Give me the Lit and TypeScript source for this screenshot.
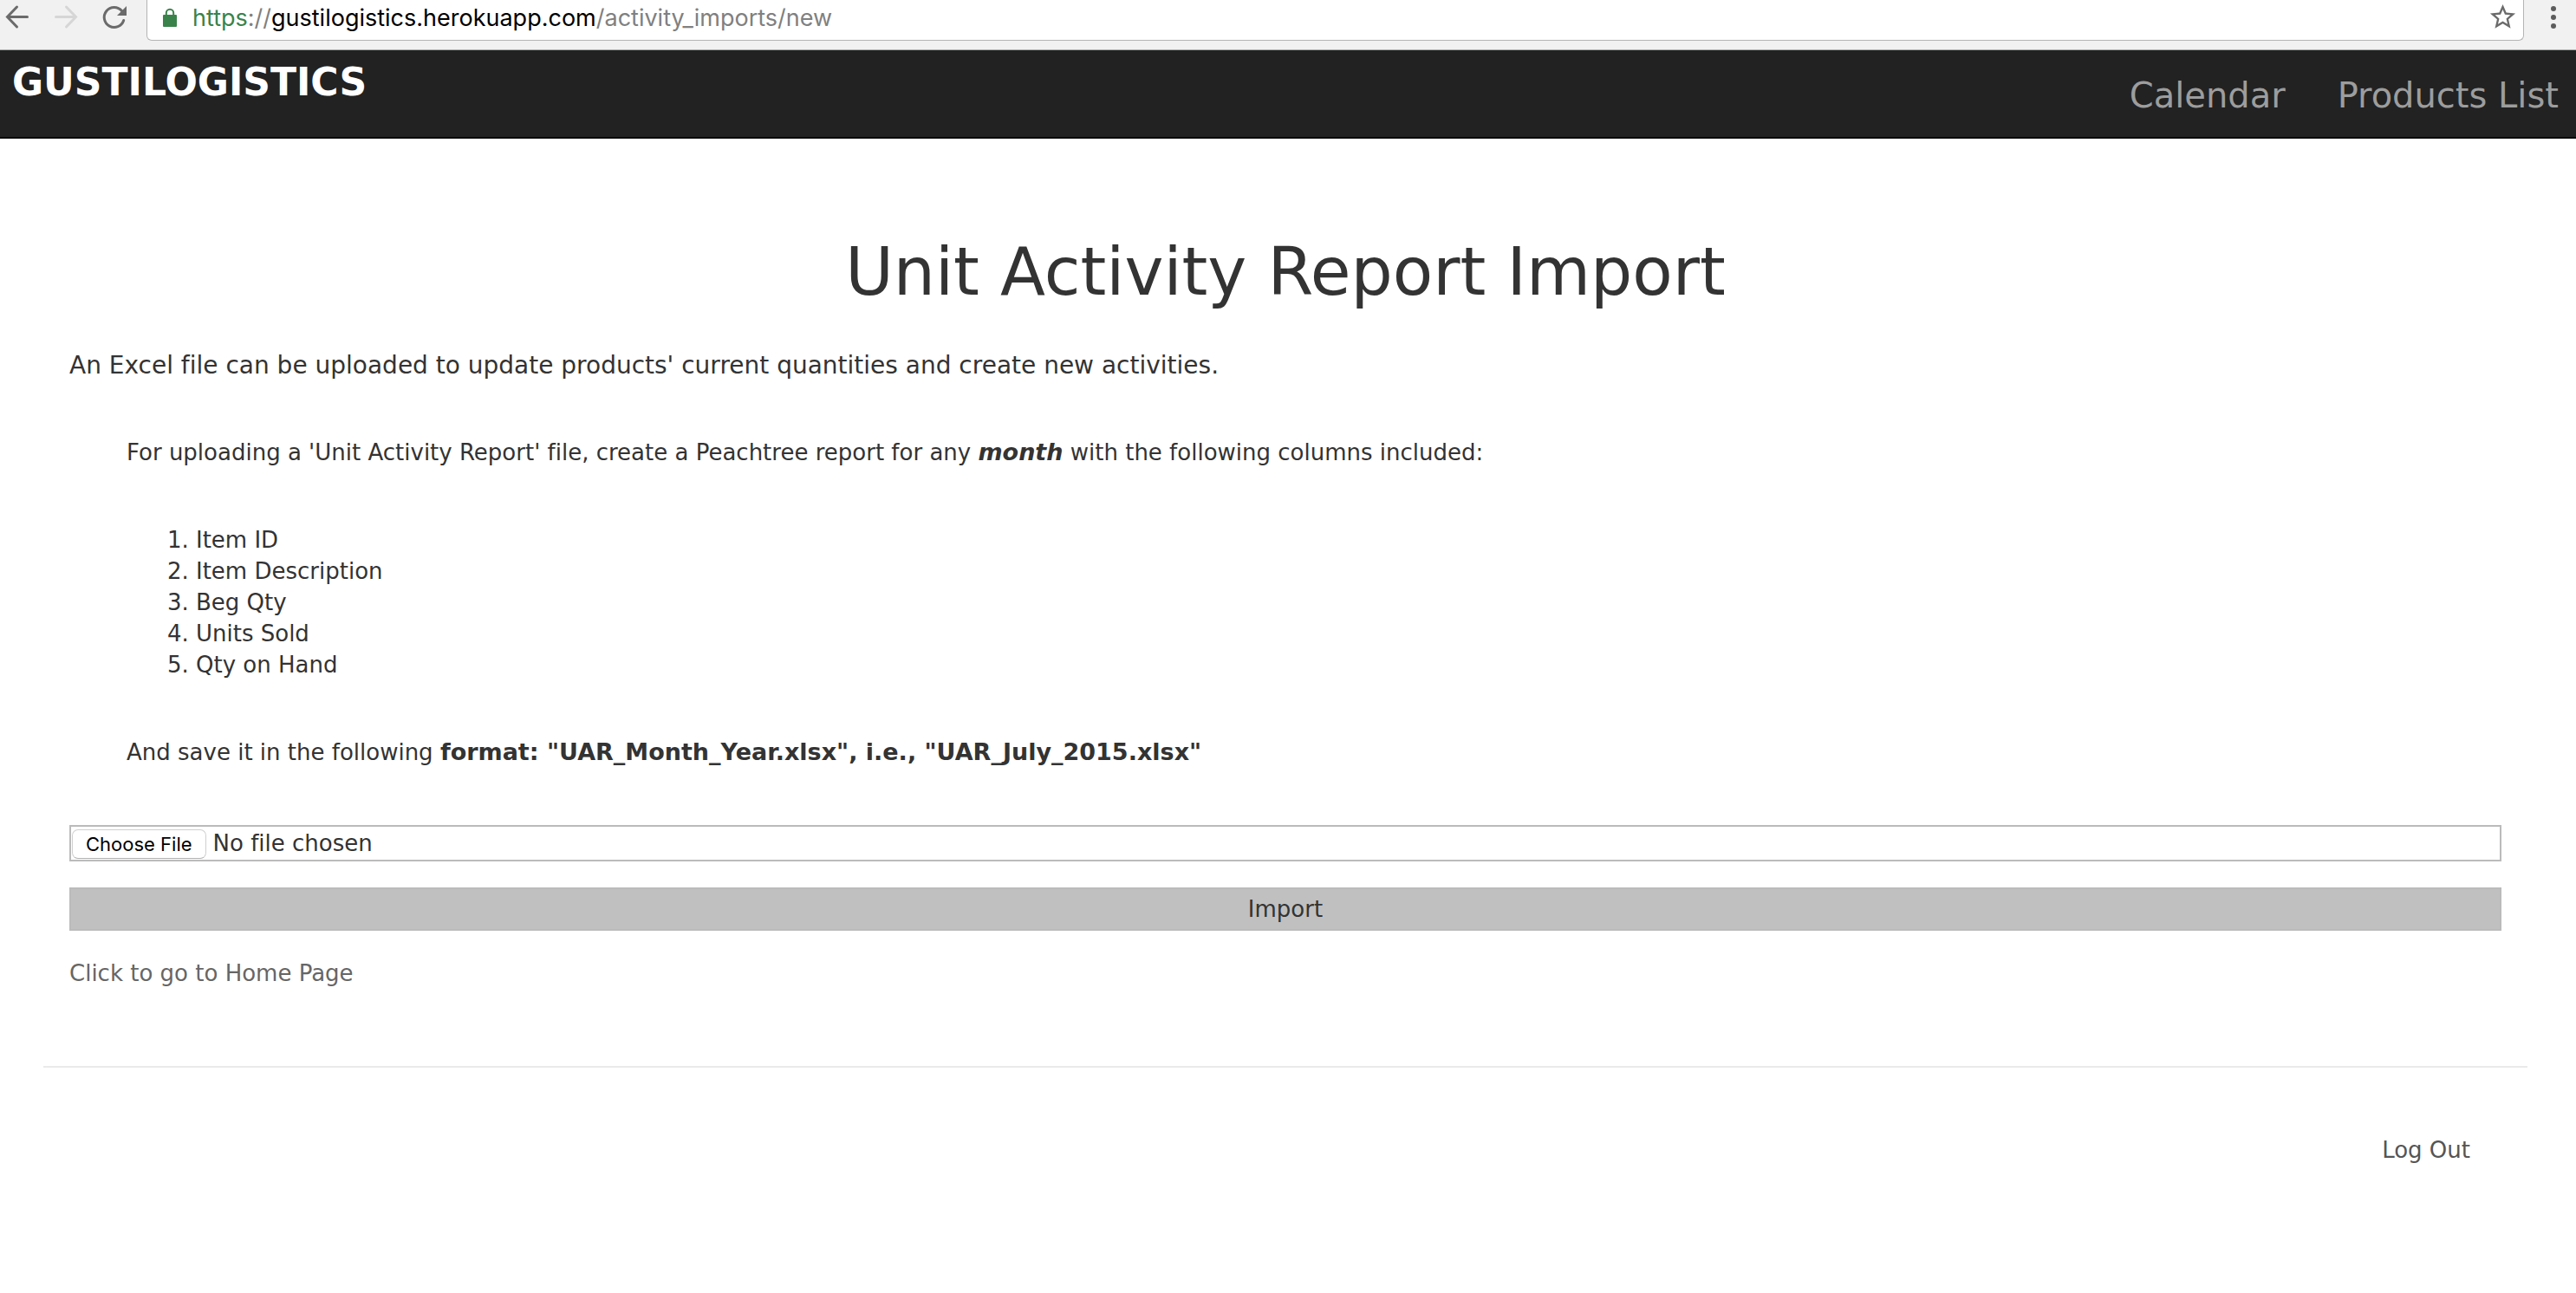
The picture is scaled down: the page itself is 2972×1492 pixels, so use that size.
import { LitElement, html, css } from "lit";
import { customElement } from "lit/decorators.js";

const COLUMNS = ["Item ID", "Item Description", "Beg Qty", "Units Sold", "Qty on Hand"];

@customElement("browser-bar")
export class BrowserBar extends LitElement {
  static styles = css`
    :host {
      display: flex;
      align-items: flex-start;
      height: 58px;
      box-sizing: border-box;
      background: #f1f1f1;
      border-bottom: 1px solid #a9abac;
      font-family: Inter, Roboto, "Liberation Sans", sans-serif;
    }
    button {
      display: block;
      padding: 0;
      border: 0;
      background: none;
    }
    svg {
      display: block;
    }
    .tools {
      display: flex;
      gap: 24px;
      padding: 4px 21px 0 4px;
    }
    .address {
      flex: 1;
      display: flex;
      justify-content: space-between;
      align-items: flex-start;
      box-sizing: border-box;
      height: 47px;
      padding: 0 6px 0 16px;
      background: #fff;
      border: 1px solid #b4b4b4;
      border-top: 0;
      border-radius: 0 0 6px 6px;
    }
    .location {
      display: flex;
      align-items: flex-start;
      gap: 16px;
    }
    .lock {
      padding-top: 9px;
    }
    .url {
      font-size: 27px;
      line-height: 42px;
      color: #808080;
      white-space: nowrap;
    }
    .scheme {
      color: #39834a;
    }
    .domain {
      color: #000;
    }
    .star {
      padding-top: 2px;
    }
    .menu {
      padding: 4px 10px 0 18px;
    }
  `;

  render() {
    return html`
      <div class="tools">
        <button aria-label="Back">
          <svg width="32" height="32" viewBox="0 0 32 32" fill="none" stroke="#6b6b6b" stroke-width="3" stroke-linecap="round">
            <path d="M27.500 15.500H5M15.500 4L4.500 15.500L15.500 27" />
          </svg>
        </button>
        <button aria-label="Forward">
          <svg width="32" height="32" viewBox="0 0 32 32" fill="none" stroke="#d6d6d6" stroke-width="3" stroke-linecap="round">
            <path d="M4.500 15.500H27M16.500 4L27.500 15.500L16.500 27" />
          </svg>
        </button>
        <button aria-label="Reload">
          <svg width="32" height="32" viewBox="0 0 32 32">
            <path d="M26.700 19.500A11.500 11.500 0 1 1 24.500 8.500" fill="none" stroke="#6b6b6b" stroke-width="3" stroke-linecap="round" />
            <path d="M30 3V14H19Z" fill="#6b6b6b" />
          </svg>
        </button>
      </div>
      <div class="address">
        <div class="location">
          <svg class="lock" width="20" height="24" viewBox="0 0 20 24">
            <rect x="2" y="8" width="16" height="14" rx="1" fill="#39834a" />
            <path d="M5.800 9V6A4.200 4.200 0 0 1 14.200 6V9" fill="none" stroke="#39834a" stroke-width="2" />
          </svg>
          <span class="url"><span class="scheme">https</span>://<span class="domain">gustilogistics.herokuapp.com</span>/activity_imports/new</span>
        </div>
        <button class="star" aria-label="Bookmark this page">
          <svg width="35" height="35" viewBox="0 0 24 24" fill="#6b6b6b">
            <path
              d="M22 9.240l-7.190-.62L12 2 9.190 8.630 2 9.240l5.460 4.730L5.820 21 12 17.270 18.180 21l-1.630-7.030L22 9.240zM12 15.400l-3.760 2.270 1-4.280-3.320-2.880 4.380-.38L12 6.100l1.710 4.040 4.380.38-3.320 2.880 1 4.280L12 15.400z"
            />
          </svg>
        </button>
      </div>
      <button class="menu" aria-label="Menu">
        <svg width="32" height="32" viewBox="0 0 32 32" fill="#5c5c5c">
          <circle cx="16" cy="6" r="3" />
          <circle cx="16" cy="16" r="3" />
          <circle cx="16" cy="26" r="3" />
        </svg>
      </button>
    `;
  }
}

@customElement("app-root")
export class AppRoot extends LitElement {
  static styles = css`
    :host {
      display: block;
      min-height: 100vh;
      background: #fff;
      color: #333;
      font-family: "DejaVu Sans", Verdana, sans-serif;
      font-size: 26px;
      line-height: 36px;
      font-variant-ligatures: none;
    }
    * {
      box-sizing: border-box;
    }
    a {
      text-decoration: none;
    }
    h1,
    p,
    ol {
      margin: 0;
    }
    b {
      font-size: 27px;
    }
    nav {
      display: flex;
      justify-content: space-between;
      align-items: flex-start;
      height: 102px;
      padding: 0 20px 0 14px;
      background: #222;
      border-bottom: 2px solid #080808;
    }
    .brand {
      padding-top: 15px;
      font-size: 44px;
      line-height: 44px;
      font-weight: 700;
      color: #fff;
    }
    .links {
      display: flex;
      gap: 60px;
      padding-top: 32px;
      font-size: 40px;
      line-height: 40px;
    }
    .links a {
      color: #9d9d9d;
    }
    main {
      padding: 112px 86px 0 80px;
    }
    h1 {
      margin-bottom: 48px;
      font-size: 76px;
      line-height: 84px;
      font-weight: 400;
      text-align: center;
    }
    .lead {
      font-size: 28px;
    }
    .steps {
      display: grid;
      gap: 65px;
      padding: 64px 66px 66px;
    }
    ol {
      padding-left: 80px;
    }
    form {
      display: grid;
      gap: 30px;
      margin-bottom: 31px;
    }
    .file {
      width: 100%;
      height: 42px;
      padding: 2px 1px;
      border: 2px solid #bbb;
      background: #fff;
      color: #333;
      font: inherit;
      line-height: 34px;
    }
    .file::file-selector-button {
      height: 34px;
      margin: 0 8px 0 0;
      padding: 0 15px;
      border: 1px solid #d0d0d0;
      border-bottom-color: #b0b0b0;
      border-radius: 7px;
      background: #fff;
      color: #000;
      font-family: Inter, Roboto, "Liberation Sans", sans-serif;
      font-size: 22px;
    }
    .submit {
      height: 50px;
      padding: 0;
      border: 2px solid #bbb;
      background: #c0c0c0;
      color: #333;
      font: inherit;
    }
    .home {
      color: #666;
    }
    footer {
      display: flex;
      justify-content: flex-end;
      margin: 89px 56px 0 50px;
      padding: 77px 66px 0;
      border-top: 2px solid #eaeaea;
    }
    footer a {
      color: #555;
    }
  `;

  render() {
    return html`
      <browser-bar></browser-bar>
      <nav>
        <a class="brand" href="/">GUSTILOGISTICS</a>
        <div class="links">
          <a href="/calendar">Calendar</a>
          <a href="/products">Products List</a>
        </div>
      </nav>
      <main>
        <h1>Unit Activity Report Import</h1>
        <p class="lead">An Excel file can be uploaded to update products' current quantities and create new activities.</p>
        <div class="steps">
          <p>For uploading a 'Unit Activity Report' file, create a Peachtree report for any <b><i>month</i></b> with the following columns included:</p>
          <ol>
            ${COLUMNS.map((name) => html`<li>${name}</li>`)}
          </ol>
          <p>And save it in the following <b>format: "UAR_Month_Year.xlsx", i.e., "UAR_July_2015.xlsx"</b></p>
        </div>
        <form @submit=${(e: Event) => e.preventDefault()}>
          <input class="file" type="file" aria-label="Unit Activity Report file" accept=".xlsx" />
          <button class="submit" type="submit">Import</button>
        </form>
        <a class="home" href="/">Click to go to Home Page</a>
      </main>
      <footer><a href="/logout">Log Out</a></footer>
    `;
  }
}
